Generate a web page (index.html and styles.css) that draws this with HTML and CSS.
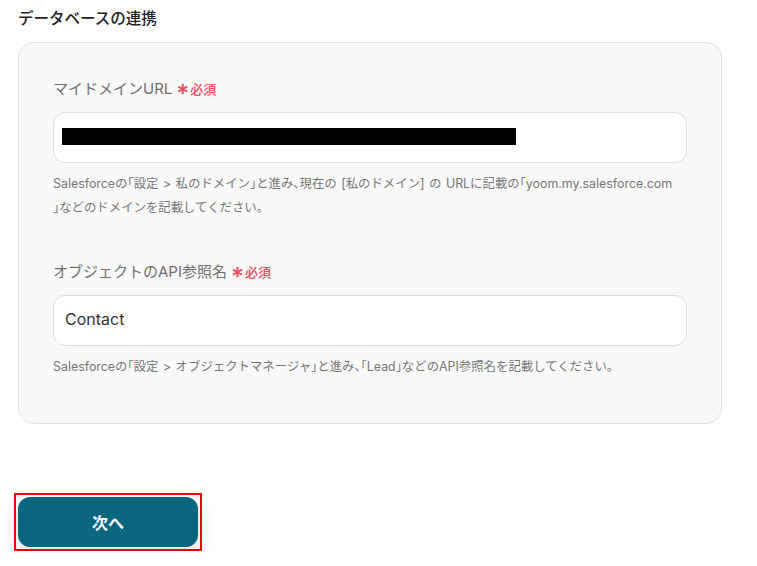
FILE: index.html
```html
<!DOCTYPE html>
<html lang="ja">
<head>
<meta charset="utf-8">
<link rel="stylesheet" href="styles.css">
</head>
<body>
<div class="page">
  <h2 class="title">データベースの連携</h2>
  <div class="card">
    <div class="field">
      <div class="label">マイドメインURL<span class="req"><span class="ast">*</span>必須</span></div>
      <div class="input"><span class="mask"></span></div>
      <p class="help">Salesforceの「設定 &gt; 私のドメイン」と進み、現在の [私のドメイン] の URLに記載の「yoom.my.salesforce.com<br>」などのドメインを記載してください。</p>
    </div>
    <div class="field second">
      <div class="label">オブジェクトのAPI参照名<span class="req"><span class="ast">*</span>必須</span></div>
      <div class="input"><span class="value">Contact</span></div>
      <p class="help">Salesforceの「設定 &gt; オブジェクトマネージャ」と進み、「Lead」などのAPI参照名を記載してください。</p>
    </div>
  </div>
  <div class="actions">
    <div class="btn-frame"><button class="btn">次へ</button></div>
  </div>
</div>
</body>
</html>
```
FILE: styles.css
```css
* { box-sizing: border-box; }
html, body { margin: 0; padding: 0; background: #fff; }
body {
  font-family: Inter, "Noto Sans CJK JP", sans-serif;
  color: #333;
}
.page { padding: 7px 36px 0 18px; width: 757px; }
.title {
  margin: 0;
  font-size: 15.5px;
  line-height: 24px;
  font-weight: 500;
  color: #222;
}
.card {
  margin-top: 11px;
  width: 704px;
  background: #f9f9f9;
  border: 1px solid #e3e3e6;
  border-radius: 16px;
  padding: 35px 34px 44px 34px;
}
.field.second { margin-top: 41px; }
.label {
  font-size: 15px;
  line-height: 22px;
  color: #707070;
  font-weight: 400;
  display: flex;
  align-items: center;
}
.req {
  color: #f0475e;
  font-size: 13px;
  font-weight: 500;
  margin-left: 4px;
  display: inline-flex;
  align-items: center;
}
.ast {
  font-size: 25px;
  line-height: 14px;
  margin-right: 1px;
  position: relative;
  top: 5px;
}
.input {
  margin-top: 12px;
  height: 51px;
  background: #fff;
  border: 1px solid #dcdce2;
  border-radius: 12px;
  display: flex;
  align-items: center;
  padding: 0 11px;
}
.mask {
  display: block;
  width: 454px;
  height: 17px;
  background: #000;
  margin-left: -3px;
  margin-top: -2px;
}
.value { font-size: 16px; color: #333; margin-top: -4px; }
.help {
  margin: 9px 0 0 0;
  font-size: 12.4px;
  line-height: 24px;
  color: #777;
  white-space: nowrap;
  font-feature-settings: "halt";
  word-spacing: 1px;
}
.actions { margin-top: 69px; }
.btn-frame {
  display: inline-block;
  border: 2px solid #ff0000;
  padding: 2px;
  margin-left: -4px;
}
.btn {
  display: block;
  width: 180px;
  height: 50px;
  border: none;
  border-radius: 12px;
  background: #0b6780;
  color: #fff;
  font-family: Inter, "Noto Sans CJK JP", sans-serif;
  font-size: 16px;
  font-weight: 700;
  box-shadow: 0 6px 20px rgba(0, 40, 60, 0.15);
}
```
